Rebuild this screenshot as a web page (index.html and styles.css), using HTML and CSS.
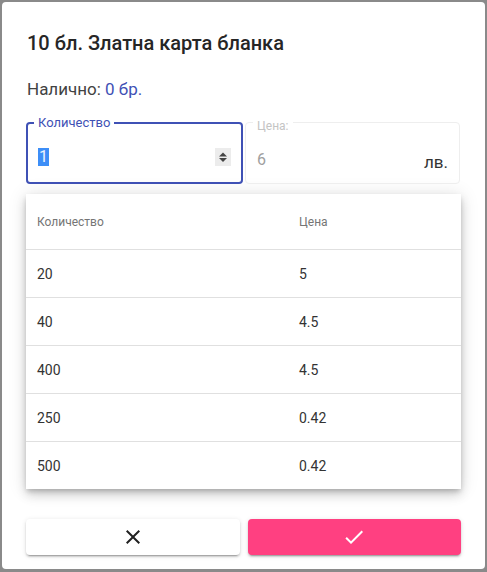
FILE: index.html
```html
<!DOCTYPE html>
<html lang="bg">
<head>
<meta charset="utf-8">
<link rel="stylesheet" href="styles.css">
</head>
<body>
<div class="dialog">
  <h1 class="title">10 бл. Златна карта бланка</h1>
  <p class="stock">Налично: <span class="accent">0 бр.</span></p>
  <div class="fields">
    <div class="field field-active">
      <span class="field-label">Количество</span>
      <div class="field-body">
        <span class="value"><span class="sel">1</span></span>
        <span class="spinner">
          <svg width="16" height="18" viewBox="0 0 16 18"><path d="M8 4.5L12 8.5H4z" fill="#444"/><path d="M8 14L4 10H12z" fill="#444"/></svg>
        </span>
      </div>
    </div>
    <div class="field field-disabled">
      <span class="field-label label-muted">Цена:</span>
      <div class="field-body">
        <span class="value value-muted">6</span>
        <span class="suffix">лв.</span>
      </div>
    </div>
  </div>
  <div class="card">
    <div class="row head"><span>Количество</span><span>Цена</span></div>
    <div class="row"><span>20</span><span>5</span></div>
    <div class="row"><span>40</span><span>4.5</span></div>
    <div class="row"><span>400</span><span>4.5</span></div>
    <div class="row"><span>250</span><span>0.42</span></div>
    <div class="row last"><span>500</span><span>0.42</span></div>
  </div>
  <div class="actions">
    <button class="btn btn-cancel" type="button">
      <svg width="24" height="24" viewBox="0 0 24 24"><path d="M19 6.41L17.59 5 12 10.59 6.41 5 5 6.41 10.59 12 5 17.59 6.41 19 12 13.41 17.59 19 19 17.59 13.41 12z" fill="#212121"/></svg>
    </button>
    <button class="btn btn-ok" type="button">
      <svg width="24" height="24" viewBox="0 0 24 24"><path d="M9 16.17L4.83 12l-1.42 1.41L9 19 21 7l-1.41-1.41z" fill="#fff"/></svg>
    </button>
  </div>
</div>
</body>
</html>
```
FILE: styles.css
```css
* { box-sizing: border-box; }
html, body { margin: 0; height: 100%; }
body {
  background: #8a8a8a;
  padding: 2px;
  font-family: Roboto, "Noto Sans", sans-serif;
  color: #212121;
}
.dialog {
  width: 483px;
  height: 567px;
  background: #fff;
  border-radius: 4px;
  padding: 25px 24px 14px 24px;
  display: flex;
  flex-direction: column;
}
.title {
  margin: 0;
  font-size: 20px;
  font-weight: 500;
  line-height: 32px;
  color: #262626;
  padding-left: 1px;
}
.stock {
  margin: 18px 0 0 0;
  font-size: 17px;
  line-height: 24px;
  color: #424242;
  padding-left: 1px;
}
.accent { color: #3f51b5; }
.fields {
  margin-top: 21px;
  display: flex;
  gap: 2px;
}
.field {
  position: relative;
  height: 62px;
  border-radius: 4px;
}
.field-active {
  width: 217px;
  border: 2px solid #3f51b5;
}
.field-disabled {
  width: 215px;
  border: 1px solid #eeeeee;
}
.field-label {
  position: absolute;
  top: -9px;
  left: 6px;
  padding: 0 4px;
  background: #fff;
  font-size: 13px;
  line-height: 15px;
  color: #3f51b5;
}
.label-muted {
  top: -4px;
  left: 7px;
  padding: 0 4px;
  font-size: 12px;
  color: #c4c4c4;
}
.field-body {
  height: 100%;
  display: flex;
  align-items: center;
  padding: 8px 10px 0 10px;
}
.field-disabled .field-body {
  padding: 8px 11px 0 11px;
}
.value {
  flex: 1;
  font-size: 16px;
  line-height: 18px;
}
.sel {
  display: inline-block;
  background: #3d8ef7;
  color: #eaf3ff;
  padding: 0 1px;
  height: 18px;
}
.value-muted { color: #a0a0a0; line-height: 20px; margin-top: 6px; }
.spinner {
  width: 16px;
  height: 18px;
  background: #ececec;
  display: flex;
}
.suffix {
  font-size: 17px;
  line-height: 20px;
  color: #333;
  margin-top: 10px;
}
.card {
  margin-top: 10px;
  background: #fff;
  box-shadow: 0 3px 5px -1px rgba(0,0,0,.2), 0 6px 10px 0 rgba(0,0,0,.14), 0 1px 18px 0 rgba(0,0,0,.12);
}
.row {
  display: grid;
  grid-template-columns: 273px 1fr;
  height: 48px;
  align-items: center;
  border-bottom: 1px solid #e0e0e0;
  font-size: 14px;
  color: #333;
}
.row span { padding-left: 11px; }
.row span + span { padding-left: 0; }
.head {
  height: 56px;
  font-size: 12px;
  color: #757575;
}
.last { border-bottom: none; height: 47px; }
.actions {
  margin-top: 30px;
  display: flex;
  gap: 8px;
}
.btn {
  flex: 1;
  height: 36px;
  border: none;
  border-radius: 4px;
  display: flex;
  align-items: center;
  justify-content: center;
  padding: 0;
  cursor: pointer;
}
.btn-cancel {
  background: #fff;
  box-shadow: 0 3px 1px -2px rgba(0,0,0,.2), 0 2px 2px 0 rgba(0,0,0,.14), 0 1px 5px 0 rgba(0,0,0,.12);
}
.btn-ok {
  background: #ff4081;
  box-shadow: 0 3px 1px -2px rgba(0,0,0,.2), 0 2px 2px 0 rgba(0,0,0,.14), 0 1px 5px 0 rgba(0,0,0,.12);
}
```
